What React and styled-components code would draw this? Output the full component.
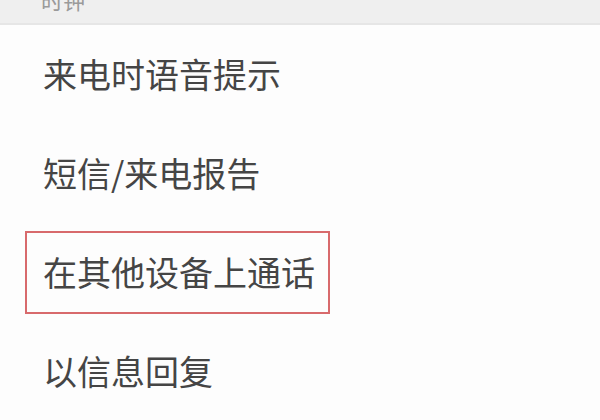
import * as React from "react"
import styled, { createGlobalStyle } from "styled-components"

const Global = createGlobalStyle`
  html, body {
    margin: 0;
    padding: 0;
    background: #ffffff;
    font-family: "Noto Sans CJK SC", "Noto Sans", sans-serif;
  }
`

const Screen = styled.div`
  width: 600px;
  height: 420px;
  overflow: hidden;
  background: #fdfdfd;
  display: flex;
  flex-direction: column;
`

const SectionHeader = styled.div`
  height: 25px;
  flex-shrink: 0;
  background: #efefef;
  border-bottom: 2px solid #e6e6e6;
  padding-left: 41px;
  overflow: hidden;
  box-sizing: border-box;
`

const HeaderText = styled.div`
  font-size: 22px;
  line-height: 22px;
  margin-top: -12px;
  color: #9a9a9a;
`

const Row = styled.div`
  height: 99px;
  flex-shrink: 0;
  display: flex;
  align-items: center;
  padding-left: 25px;
`

const Label = styled.div`
  font-size: 34px;
  line-height: 40px;
  color: #454545;
  padding: 19px 13px 20px 16px;
  border: 2px solid ${p => (p.$marked ? "#d86a6c" : "transparent")};
`

const items = [
  { text: "来电时语音提示" },
  { text: "短信/来电报告" },
  { text: "在其他设备上通话", marked: true },
  { text: "以信息回复" },
]

const App = () => {
  return (
    <>
      <Global />
      <Screen>
        <SectionHeader>
          <HeaderText>时钟</HeaderText>
        </SectionHeader>
        {items.map(item => (
          <Row key={item.text}>
            <Label $marked={item.marked}>{item.text}</Label>
          </Row>
        ))}
      </Screen>
    </>
  )
}

export default App
